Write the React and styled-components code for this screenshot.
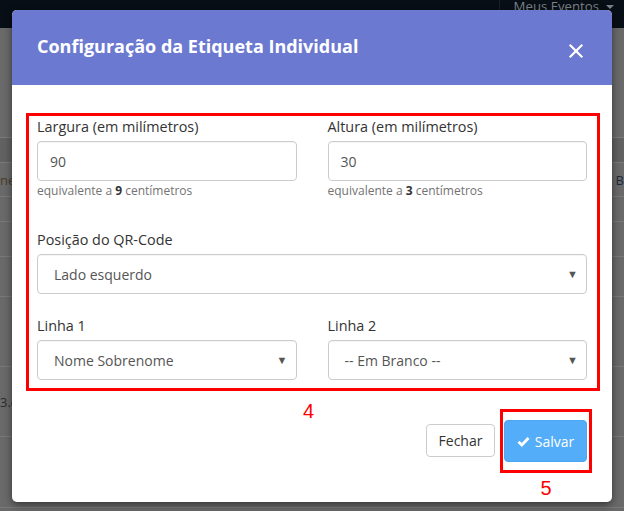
import React from "react";
import styled, { createGlobalStyle } from "styled-components";

const Global = createGlobalStyle`
  html, body { margin: 0; padding: 0; height: 100%; overflow: hidden; }
  body { font-family: "Open Sans", "Liberation Sans", sans-serif; background: #666; }
  #root { height: 100%; }
`;

const Page = styled.div`
  position: relative;
  width: 624px;
  height: 511px;
  overflow: hidden;
  background: #6a6a6a;
  display: flex;
  flex-direction: column;
`;

const Navbar = styled.div`
  height: 28px;
  flex: none;
  background: #070e15;
  display: flex;
  justify-content: flex-end;
  align-items: flex-start;
  overflow: hidden;
`;

const NavItem = styled.div`
  margin-top: -7px;
  padding: 4px 10px 0 14px;
  border-left: 1px solid #1a2028;
  height: 40px;
  font-size: 13.2px;
  color: #7d8287;
  display: flex;
  align-items: flex-start;
  gap: 7px;
  box-sizing: border-box;
  &::after {
    content: "";
    margin-top: 8px;
    border-left: 4px solid transparent;
    border-right: 4px solid transparent;
    border-top: 4px solid #7d8287;
  }
`;

const Table = styled.div`
  display: flex;
  flex-direction: column;
`;

const Row = styled.div`
  height: ${(p) => p.h}px;
  flex: none;
  border-bottom: 1px solid #7a7a7a;
  background: ${(p) => (p.dark ? "#626262" : "transparent")};
  box-sizing: border-box;
  display: flex;
  align-items: center;
  justify-content: space-between;
  font-size: 13px;
`;

const CellText = styled.span`
  color: ${(p) => p.color || "#2a2a2a"};
`;

const Overlay = styled.div`
  position: absolute;
  inset: 0;
  display: flex;
  justify-content: center;
  align-items: flex-start;
  padding-top: 10px;
`;

const Modal = styled.div`
  width: 600px;
  height: 492px;
  background: #fff;
  border-radius: 5px;
  box-shadow: 0 3px 9px rgba(0, 0, 0, 0.5);
  overflow: hidden;
  display: flex;
  flex-direction: column;
`;

const Header = styled.div`
  height: 75px;
  flex: none;
  background: #6c79d1;
  display: flex;
  align-items: center;
  justify-content: space-between;
  padding: 0 28px 0 25px;
  box-sizing: border-box;
`;

const Title = styled.h4`
  margin: 0 0 4px;
  font-size: 18px;
  font-weight: 700;
  color: #fff;
`;

const Close = styled.button`
  border: 0;
  background: none;
  padding: 0;
  width: 16px;
  height: 16px;
  display: flex;
  margin-top: 6px;
  cursor: pointer;
`;

const Body = styled.div`
  padding: 28px 12px 0 14px;
`;

const RedBox = styled.div`
  border: 3px solid #ff0000;
  padding: 1px 10px 0 8px;
  height: 278px;
  box-sizing: border-box;
  display: flex;
  flex-direction: column;
`;

const FormRow = styled.div`
  display: grid;
  grid-template-columns: ${(p) => (p.single ? "1fr" : "1fr 1fr")};
  column-gap: 31px;
  margin-bottom: ${(p) => p.mb || 0}px;
`;

const Group = styled.div`
  display: flex;
  flex-direction: column;
`;

const Label = styled.label`
  font-size: 14.4px;
  line-height: 20px;
  color: #333;
  margin-bottom: 4px;
`;

const Input = styled.div`
  height: 40px;
  box-sizing: border-box;
  border: 1px solid #ccc;
  border-radius: 4px;
  padding: 0 12px 0 ${(p) => (p.select ? 16 : 12)}px;
  display: flex;
  align-items: center;
  justify-content: space-between;
  font-size: 14px;
  color: #555;
  background: #fff;
  box-shadow: inset 0 1px 1px rgba(0, 0, 0, 0.04);
`;

const Caret = styled.span`
  font-size: 11px;
  color: #555;
  margin-right: -4px;
  margin-top: -2px;
`;

const Help = styled.div`
  font-size: 12px;
  line-height: 17px;
  color: #737373;
  margin-top: 1px;
  b { color: #333; font-weight: 700; }
`;

const Footer = styled.div`
  position: relative;
  display: flex;
  justify-content: flex-end;
  align-items: flex-start;
  gap: 5px;
  padding: 18px 20px 0 0;
`;

const Number = styled.span`
  font-size: 20px;
  line-height: 20px;
  color: #f00;
  font-family: "Liberation Sans", "Open Sans", sans-serif;
`;

const FloatNumber = styled(Number)`
  position: absolute;
  left: 291px;
  top: 10px;
`;

const Button = styled.button`
  font-family: "Open Sans", "Liberation Sans", sans-serif;
  font-size: 14px;
  border-radius: 4px;
  cursor: pointer;
  display: flex;
  align-items: center;
  justify-content: center;
  gap: 5px;
  box-sizing: border-box;
`;

const DefaultButton = styled(Button)`
  margin-top: 15px;
  width: 69px;
  height: 33px;
  background: #fff;
  color: #333;
  border: 1px solid #ccc;
`;

const PrimaryButton = styled(Button)`
  width: 83px;
  height: 42px;
  background: #54adf8;
  color: #fff;
  border: 1px solid #4ba6f3;
`;

const SaveWrap = styled.div`
  display: flex;
  flex-direction: column;
  align-items: center;
  gap: 5px;
`;

const SaveBox = styled.div`
  border: 3px solid #f00;
  padding: 8px 2px 8px 1px;
`;

const rows = [
  { h: 110 },
  { h: 25, dark: true },
  { h: 34, left: "ne", right: "B" },
  { h: 25 },
  { h: 35 },
  { h: 40 },
  { h: 70 },
  { h: 70, left: "3.c" },
  { h: 71 },
];

export default function App() {
  return (
    <Page>
      <Global />
      <Navbar>
        <NavItem>Meus Eventos</NavItem>
      </Navbar>
      <Table>
        {rows.map((r, i) => (
          <Row key={i} h={r.h} dark={r.dark}>
            <CellText color={r.left === "ne" ? "#4a3a2c" : "#2a2a2a"}>{r.left || ""}</CellText>
            <CellText color="#1e2a3a">{r.right || ""}</CellText>
          </Row>
        ))}
      </Table>
      <Overlay>
        <Modal>
          <Header>
            <Title>Configuração da Etiqueta Individual</Title>
            <Close aria-label="Fechar">
              <svg width="16" height="16" viewBox="0 0 16 16">
                <path d="M2.5 2.5 L13.5 13.5 M13.5 2.5 L2.5 13.5" stroke="#fff" strokeWidth="2.2" strokeLinecap="square" />
              </svg>
            </Close>
          </Header>
          <Body>
            <RedBox>
              <FormRow mb={31}>
                <Group>
                  <Label>Largura (em milímetros)</Label>
                  <Input>90</Input>
                  <Help>equivalente a <b>9</b> centímetros</Help>
                </Group>
                <Group>
                  <Label>Altura (em milímetros)</Label>
                  <Input>30</Input>
                  <Help>equivalente a <b>3</b> centímetros</Help>
                </Group>
              </FormRow>
              <FormRow single mb={22}>
                <Group>
                  <Label>Posição do QR-Code</Label>
                  <Input select>
                    Lado esquerdo<Caret>▼</Caret>
                  </Input>
                </Group>
              </FormRow>
              <FormRow>
                <Group>
                  <Label>Linha 1</Label>
                  <Input select>
                    Nome Sobrenome<Caret>▼</Caret>
                  </Input>
                </Group>
                <Group>
                  <Label>Linha 2</Label>
                  <Input select>
                    -- Em Branco --<Caret>▼</Caret>
                  </Input>
                </Group>
              </FormRow>
            </RedBox>
          </Body>
          <Footer>
            <FloatNumber>4</FloatNumber>
            <DefaultButton>Fechar</DefaultButton>
            <SaveWrap>
              <SaveBox>
                <PrimaryButton>
                  <svg width="13" height="11" viewBox="0 0 13 11">
                    <path d="M1.5 5.8 L4.8 9 L11.5 2" stroke="#fff" strokeWidth="2.8" fill="none" strokeLinejoin="miter" />
                  </svg>
                  Salvar
                </PrimaryButton>
              </SaveBox>
              <Number>5</Number>
            </SaveWrap>
          </Footer>
        </Modal>
      </Overlay>
    </Page>
  );
}
